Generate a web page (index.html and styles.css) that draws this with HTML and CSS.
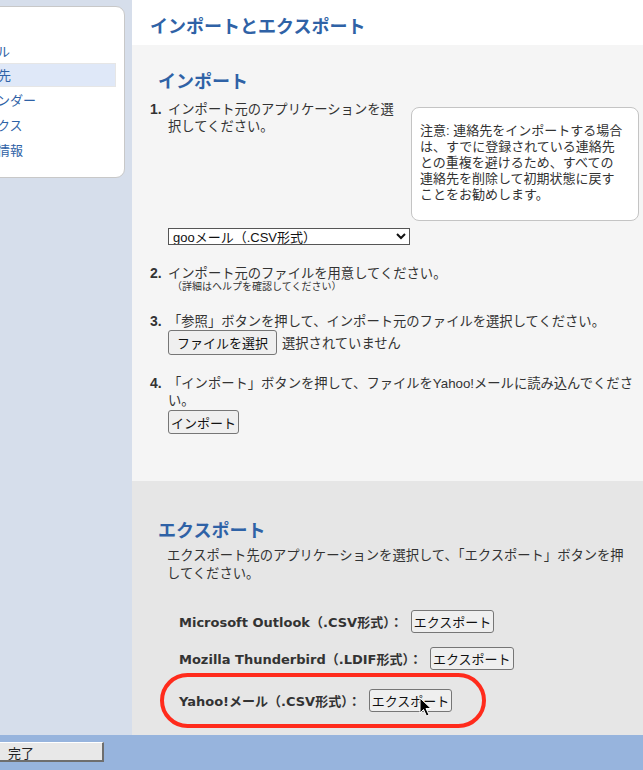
FILE: index.html
```html
<!DOCTYPE html>
<html lang="ja">
<head>
    <meta charset="UTF-8">
    <title>インポートとエクスポート</title>
    <link rel="stylesheet" href="styles.css">
</head>
<body>

    <!-- Side menu (scrolled partly off screen) -->
    <div class="side">
        <div class="side-card">
            <a class="side-item" href="#">メール</a>
            <a class="side-item active" href="#">連絡先</a>
            <a class="side-item" href="#">カレンダー</a>
            <a class="side-item" href="#">ボックス</a>
            <a class="side-item" href="#">個人情報</a>
        </div>
    </div>

    <!-- Main -->
    <div class="main">
        <h1 class="page-title">インポートとエクスポート</h1>

        <div class="import">
            <h2 class="section-title">インポート</h2>

            <ol class="steps">
                <li class="step">
                    <span class="num">1.</span>
                    <div class="step-body">
                        <div class="step-row">
                            <p class="step-text">インポート元のアプリケーションを選択してください。</p>
                            <div class="note">注意: 連絡先をインポートする場合は、すでに登録されている連絡先との重複を避けるため、すべての連絡先を削除して初期状態に戻すことをお勧めします。</div>
                        </div>
                        <select class="app-select">
                            <option>gooメール（.CSV形式）</option>
                            <option>Microsoft Outlook（.CSV形式）</option>
                            <option>Mozilla Thunderbird（.LDIF形式）</option>
                        </select>
                    </div>
                </li>
                <li class="step">
                    <span class="num">2.</span>
                    <div class="step-body">
                        <p class="step-text">インポート元のファイルを用意してください。</p>
                        <p class="hint">（詳細はヘルプを確認してください）</p>
                    </div>
                </li>
                <li class="step">
                    <span class="num">3.</span>
                    <div class="step-body">
                        <p class="step-text">「参照」ボタンを押して、インポート元のファイルを選択してください。</p>
                        <div class="file-row">
                            <button class="btn btn-file">ファイルを選択</button>
                            <span>選択されていません</span>
                        </div>
                    </div>
                </li>
                <li class="step">
                    <span class="num">4.</span>
                    <div class="step-body">
                        <p class="step-text">「インポート」ボタンを押して、ファイルをYahoo!メールに読み込んでください。</p>
                        <button class="btn btn-import">インポート</button>
                    </div>
                </li>
            </ol>
        </div>

        <div class="export">
            <h2 class="section-title">エクスポート</h2>
            <p class="export-desc">エクスポート先のアプリケーションを選択して、「エクスポート」ボタンを押してください。</p>

            <div class="export-row">
                <span class="app-name">Microsoft Outlook（.CSV形式）：</span>
                <button class="btn">エクスポート</button>
            </div>
            <div class="export-row">
                <span class="app-name">Mozilla Thunderbird（.LDIF形式）：</span>
                <button class="btn">エクスポート</button>
            </div>
            <div class="export-row highlight">
                <span class="app-name">Yahoo!メール（.CSV形式）：</span>
                <button class="btn">エクスポート</button>
                <svg class="cursor" width="13" height="20" viewBox="0 0 13 20">
                    <path d="M1 1 L1 16 L4.5 12.5 L7.5 19 L10 18 L7 11.5 L12 11.5 Z" fill="#000" stroke="#fff" stroke-width="1"/>
                </svg>
            </div>
        </div>
    </div>

    <!-- Bottom bar -->
    <div class="bottom-bar">
        <button class="done">完了</button>
    </div>

</body>
</html>
```

FILE: styles.css
```css
* {
    margin: 0;
    padding: 0;
    box-sizing: border-box;
}

body {
    width: 643px;
    height: 770px;
    overflow: hidden;
    font-family: 'Liberation Sans', 'Noto Sans CJK JP', sans-serif;
    font-size: 13.3px;
    color: #333;
    background-color: #d6deeb;
    display: grid;
    grid-template-columns: 132px 1fr;
    grid-template-rows: 735px 35px;
}

/* Side menu */
.side {
    padding-top: 6px;
    overflow: hidden;
}

.side-card {
    width: 160px;
    height: 172px;
    margin-left: -35px;
    background-color: #fff;
    border: 1px solid #c8c8c8;
    border-radius: 9px;
    padding: 31px 8px 0 0;
}

.side-item {
    display: block;
    height: 25px;
    line-height: 25px;
    padding-left: 5px;
    font-family: 'Noto Sans CJK JP', sans-serif;
    font-size: 13px;
    color: #2f62a6;
    text-decoration: none;
}

.side-item.active {
    height: 24px;
    line-height: 22px;
    background-color: #dfe8f8;
    border: 1px solid #e6e6e6;
}

/* Main */
.main {
    background-color: #f5f5f5;
    display: flex;
    flex-direction: column;
    overflow: hidden;
}

.page-title {
    height: 45px;
    background-color: #fff;
    padding: 14px 0 0 18px;
    font-size: 18px;
    line-height: 22px;
    color: #2f62a6;
    font-family: 'Noto Sans CJK JP', sans-serif;
}

.section-title {
    margin-left: 8px;
    font-size: 18px;
    line-height: 22px;
    color: #2f62a6;
    font-family: 'Noto Sans CJK JP', sans-serif;
}

/* Import */
.import {
    height: 436px;
    padding: 24px 0 0 18px;
}

.steps {
    list-style: none;
    margin-top: 10px;
}

.step {
    display: flex;
    margin-bottom: 20px;
}

.num {
    width: 18px;
    flex: none;
    font-weight: bold;
    line-height: 17px;
    font-size: 14px;
}

.step-body {
    flex: 1;
}

.step-text {
    line-height: 17px;
}

.step-row {
    display: flex;
    gap: 11px;
}

.step-row .step-text {
    width: 232px;
    flex: none;
}

.note {
    width: 228px;
    height: 114px;
    margin-top: 6px;
    padding: 15px 13px 0 8px;
    background-color: #fff;
    border: 1px solid #c4c4c4;
    border-radius: 8px;
    font-size: 13px;
    line-height: 16px;
}

.app-select {
    width: 242px;
    height: 17px;
    margin-top: 7px;
    font-family: inherit;
    font-size: 13px;
    color: #111;
    background-color: #fff;
    border: 1px solid #555;
    border-radius: 0;
}

.hint {
    font-size: 10px;
    line-height: 13px;
    margin: -2px 0 0 4px;
}

.btn {
    height: 23px;
    padding: 0 2px;
    font-family: 'Noto Sans CJK JP', sans-serif;
    font-size: 13px;
    color: #111;
    background-color: #efefef;
    border: 1px solid #767676;
    border-radius: 3px;
}

.file-row {
    display: flex;
    align-items: center;
    gap: 5px;
}

.btn-file {
    height: 25px;
    padding: 0 8px;
}

.btn-import {
    height: 24px;
    margin-top: 1px;
}

/* Export */
.export {
    flex: 1;
    background-color: #e6e6e6;
    padding: 37px 10px 0 18px;
}

.export-desc {
    margin: 7px 0 0 17px;
    line-height: 18px;
}

.export-row {
    display: flex;
    align-items: center;
    gap: 8px;
    margin: 27px 0 0 29px;
    height: 23px;
}

.export-row + .export-row {
    margin-top: 14px;
}

.app-name {
    font-family: 'DejaVu Sans', 'Noto Sans CJK JP', sans-serif;
    font-weight: bold;
    font-size: 13px;
    color: #333;
}

.highlight {
    position: relative;
    width: 326px;
    height: 55px;
    margin-left: 10px;
    padding-left: 15px;
    border: 4px solid #ff2b1c;
    border-radius: 28px;
}

.export-row.highlight {
    margin-top: 3px;
}

.cursor {
    position: absolute;
    left: 255px;
    top: 20px;
}

/* Bottom bar */
.bottom-bar {
    grid-column: 1 / 3;
    background-color: #97b4dd;
    padding-top: 7px;
}

.done {
    display: block;
    width: 104px;
    height: 20px;
    padding-left: 8px;
    text-align: left;
    font-family: 'Noto Sans CJK JP', sans-serif;
    font-size: 13px;
    color: #222;
    background-color: #e8e8e8;
    border: none;
    border-top: 1px solid #fff;
    border-right: 2px solid #6e6e6e;
    border-bottom: 2px solid #6e6e6e;
}
```
